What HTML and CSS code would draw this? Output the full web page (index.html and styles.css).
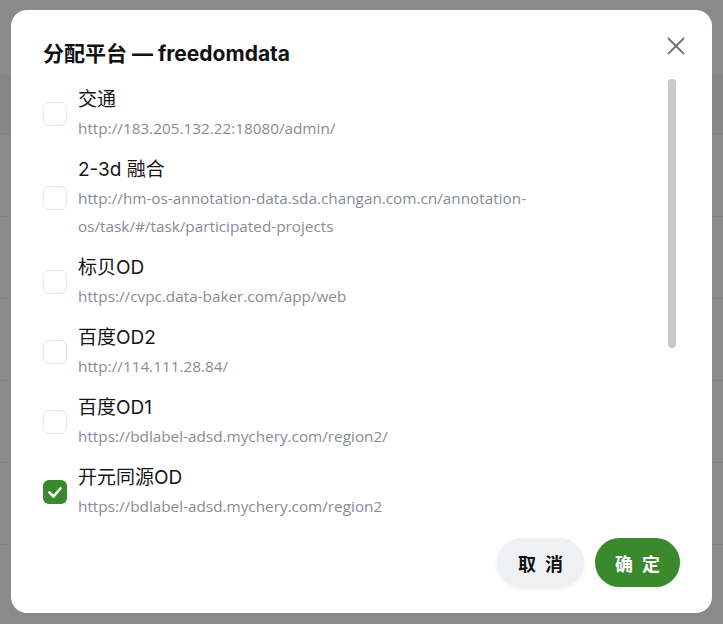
FILE: index.html
```html
<!DOCTYPE html>
<html lang="zh-CN">
<head>
  <meta charset="UTF-8">
  <meta name="viewport" content="width=device-width, initial-scale=1.0">
  <title>分配平台</title>
  <link rel="stylesheet" href="styles.css">
</head>
<body>
  <!-- table behind the overlay -->
  <div class="page">
    <div class="table-head"></div>
    <div class="table-row"></div>
    <div class="table-row"></div>
    <div class="table-row"></div>
    <div class="table-row"></div>
    <div class="table-row"></div>
  </div>

  <div class="overlay">
    <div class="modal">
      <h2 class="modal-title">分配平台 — freedomdata</h2>
      <button class="close" aria-label="关闭">
        <svg width="18" height="18" viewBox="0 0 18 18">
          <path d="M1.5 1.5 L16.5 16.5 M16.5 1.5 L1.5 16.5" stroke="#6b7280" stroke-width="1.8" stroke-linecap="round" fill="none"/>
        </svg>
      </button>

      <div class="list-wrap">
        <div class="platform-list">
          <label class="platform">
            <span class="box"></span>
            <span class="info">
              <span class="name">交通</span>
              <span class="url">http://183.205.132.22:18080/admin/</span>
            </span>
          </label>
          <label class="platform">
            <span class="box"></span>
            <span class="info">
              <span class="name">2-3d 融合</span>
              <span class="url">http://hm-os-annotation-data.sda.changan.com.cn/annotation-os/task/#/task/participated-projects</span>
            </span>
          </label>
          <label class="platform">
            <span class="box"></span>
            <span class="info">
              <span class="name">标贝OD</span>
              <span class="url">https://cvpc.data-baker.com/app/web</span>
            </span>
          </label>
          <label class="platform">
            <span class="box"></span>
            <span class="info">
              <span class="name">百度OD2</span>
              <span class="url">http://114.111.28.84/</span>
            </span>
          </label>
          <label class="platform">
            <span class="box"></span>
            <span class="info">
              <span class="name">百度OD1</span>
              <span class="url">https://bdlabel-adsd.mychery.com/region2/</span>
            </span>
          </label>
          <label class="platform">
            <span class="box checked">
              <svg width="24" height="24" viewBox="0 0 24 24">
                <path d="M6.5 12.5 L10.5 16.5 L17.5 8.5" stroke="#fff" stroke-width="2.6" stroke-linecap="round" stroke-linejoin="round" fill="none"/>
              </svg>
            </span>
            <span class="info">
              <span class="name">开元同源OD</span>
              <span class="url">https://bdlabel-adsd.mychery.com/region2</span>
            </span>
          </label>
        </div>
        <!-- scrollbar thumb, list is scrolled to the top -->
        <div class="scroll-thumb"></div>
      </div>

      <div class="modal-footer">
        <button class="btn btn-cancel">取消</button>
        <button class="btn btn-ok">确定</button>
      </div>
    </div>
  </div>
</body>
</html>
```

FILE: styles.css
```css
* {
  box-sizing: border-box;
}
html, body {
  margin: 0;
  height: 100%;
}
body {
  background-color: #8a8a8a;
  font-family: Inter, "Noto Sans CJK SC", sans-serif;
  color: #151515;
  overflow: hidden;
}

/* dimmed table under the overlay */
.page {
  padding-top: 75px;
}
.table-head {
  height: 60px;
  background-color: #868686;
  border-bottom: 1px solid #838383;
}
.table-row {
  height: 82px;
  border-bottom: 1px solid #838383;
}

.overlay {
  position: fixed;
  inset: 0;
}
.modal {
  position: absolute;
  left: 11px;
  top: 10px;
  width: 701px;
  height: 603px;
  background-color: #fff;
  border-radius: 16px;
  padding: 30px 32px 26px 32px;
  display: flex;
  flex-direction: column;
}
.modal-title {
  margin: 0;
  font-size: 21px;
  line-height: 28px;
  font-weight: 700;
  color: #111;
}
.close {
  position: absolute;
  top: 27px;
  right: 27px;
  width: 18px;
  height: 18px;
  padding: 0;
  border: none;
  background: none;
  cursor: pointer;
}
.close svg {
  display: block;
}

.list-wrap {
  position: relative;
  flex: 1;
  min-height: 0;
  margin-top: 10px;
  margin-right: 4px;
}
.platform-list {
  height: 100%;
  padding: 8px 16px 0 0;
  overflow: hidden;
  display: flex;
  flex-direction: column;
  gap: 14px;
}
.scroll-thumb {
  position: absolute;
  top: 1px;
  right: 0;
  width: 8px;
  height: 269px;
  background-color: #c9c9c9;
  border-radius: 4px;
}

.platform {
  display: flex;
  align-items: center;
  gap: 11px;
  cursor: pointer;
  flex-shrink: 0;
}
.box {
  width: 24px;
  height: 24px;
  flex-shrink: 0;
  border: 1.5px solid #e4e6eb;
  border-radius: 6px;
  background-color: #fff;
}
.box.checked {
  border: none;
  background-color: #3a8a2d;
}
.box svg {
  display: block;
}
.info {
  display: flex;
  flex-direction: column;
  min-width: 0;
}
.name {
  font-size: 19px;
  line-height: 28px;
  color: #151515;
}
.url {
  font-family: "Open Sans", sans-serif;
  font-size: 15.3px;
  line-height: 28px;
  color: #878c95;
}

.modal-footer {
  margin-top: 10px;
  display: flex;
  justify-content: flex-end;
  gap: 11px;
}
.btn {
  height: 49px;
  border: none;
  border-radius: 25px;
  padding: 0 12px 0 21px;
  font-family: "Noto Sans CJK SC", sans-serif;
  font-size: 18px;
  font-weight: 700;
  letter-spacing: 9px;
  cursor: pointer;
  box-shadow: 0 2px 4px rgba(0, 0, 0, 0.06);
}
.btn-cancel {
  background-color: #eef0f4;
  color: #111;
}
.btn-ok {
  background-color: #3a8a2d;
  color: #fff;
  padding: 0 11px 0 20px;
}
```
